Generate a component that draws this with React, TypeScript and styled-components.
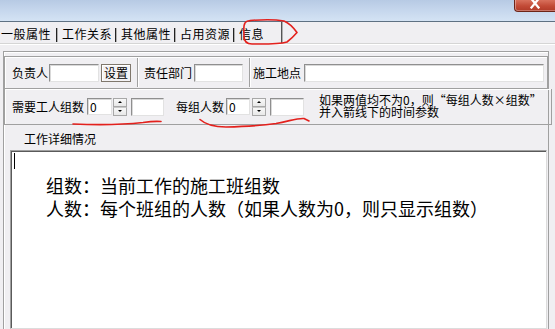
import React from 'react';
import styled, { createGlobalStyle } from 'styled-components';

const Global = createGlobalStyle`
  html, body { margin: 0; padding: 0; background: #f0eff2; }
  body {
    width: 555px; height: 329px; overflow: hidden;
    font-family: "Noto Sans CJK SC", "Noto Sans", sans-serif;
    color: #000;
  }
`;

const Window = styled.div`
  position: relative;
  width: 555px;
  height: 329px;
  overflow: hidden;
  background: #f0eff2;
  display: flex;
  flex-direction: column;
`;

const TitleBar = styled.div`
  flex: none;
  height: 21px;
  background: linear-gradient(to bottom, #b7cae4 0%, #c6d7ed 50%, #d4e3f4 100%);
  border-bottom: 1px solid #5f7183;
  display: flex;
  justify-content: flex-end;
  align-items: flex-start;
`;

const CloseBtn = styled.div`
  width: 40px;
  height: 11px;
  background: linear-gradient(to bottom, #d8705c 0%, #c24a36 55%, #b03a28 100%);
  border-left: 1px solid #6e2418;
  border-bottom: 1px solid #6e2418;
  border-bottom-left-radius: 4px;
  display: flex;
  justify-content: center;
  align-items: flex-start;
  box-shadow: inset 1px 0 0 rgba(255,255,255,0.35), inset 0 -1px 0 rgba(255,255,255,0.3);
`;

const TabStrip = styled.div`
  flex: none;
  height: 21px;
  display: flex;
  align-items: stretch;
  border-bottom: 1px solid #d5d5d5;
  box-shadow: 0 1px 0 #ffffff;
  font-size: 12px;
`;

const Tab = styled.div<{ $first?: boolean; $active?: boolean }>`
  display: flex;
  align-items: center;
  padding: 3px ${p => (p.$active ? 18 : p.$first ? 6 : 4)}px 0 ${p => (p.$first ? 1 : 5)}px;
  line-height: 12px;
  letter-spacing: 0.5px;
  position: relative;
  &::after {
    content: '';
    position: absolute;
    right: 0;
    top: ${p => (p.$active ? 0 : 6)}px;
    bottom: ${p => (p.$active ? 0 : 1)}px;
    width: 1px;
    background: ${p => (p.$active ? '#555' : '#222')};
    box-shadow: 1px 0 0 #b0b0b0;
  }
`;

const TabPage = styled.div`
  margin: 7px 6px 0 3px;
  flex: 1;
  border-left: 1px solid #a0a0a0;
  border-top: 1px solid #a0a0a0;
  border-right: 1px solid #a0a0a0;
  box-shadow: inset 1px 1px 0 #ffffff;
  padding-top: 4px;
  display: flex;
  flex-direction: column;
  font-size: 12px;
`;

const GroupRow = styled.div<{ $h: number; $mr: number }>`
  height: ${p => p.$h}px;
  box-sizing: border-box;
  margin-right: ${p => p.$mr}px;
  border: 1px solid #a0a0a0;
  box-shadow: inset 1px 1px 0 #ffffff;
  display: flex;
  align-items: center;
  padding-left: 7px;
  & + & { border-top: none; }
`;

const Label = styled.span<{ $ml?: number; $mr?: number }>`
  white-space: nowrap;
  line-height: 12px;
  margin-left: ${p => p.$ml ?? 0}px;
  margin-right: ${p => p.$mr ?? 1}px;
`;

const TextBox = styled.div<{ $w?: number; $h?: number; $grow?: boolean; $ml?: number; $mr?: number }>`
  box-sizing: border-box;
  width: ${p => (p.$w ? `${p.$w}px` : 'auto')};
  ${p => (p.$grow ? 'flex: 1;' : 'flex: none;')}
  height: ${p => p.$h ?? 18}px;
  margin-left: ${p => p.$ml ?? 0}px;
  margin-right: ${p => p.$mr ?? 0}px;
  background: #ffffff;
  border: 1px solid;
  border-color: #8f8f8f #e2e2e2 #e2e2e2 #8f8f8f;
  box-shadow: inset 1px 1px 0 #d9d9d9;
  font-size: 12px;
  line-height: 15px;
  padding-left: 2px;
`;

const Button = styled.div`
  box-sizing: border-box;
  width: 30px;
  height: 18px;
  margin-left: 2px;
  border: 1px solid #7f776c;
  background: #f3f2f4;
  box-shadow: inset 1px 1px 0 #ffffff;
  display: flex;
  align-items: center;
  justify-content: center;
  font-size: 12px;
  line-height: 12px;
`;

const Separator = styled.div<{ $ml: number; $mr: number }>`
  align-self: stretch;
  width: 1px;
  margin: 1px ${p => p.$mr}px 1px ${p => p.$ml}px;
  background: #a0a0a0;
  box-shadow: 1px 0 0 #ffffff;
`;

const Spinner = styled.div<{ $ml: number }>`
  flex: none;
  width: 14px;
  height: 18px;
  margin-left: ${p => p.$ml}px;
  display: flex;
  flex-direction: column;
`;

const SpinBtn = styled.div`
  flex: 1;
  box-sizing: border-box;
  border: 1px solid #a8a8a8;
  background: linear-gradient(to bottom, #f8f8f8, #e8e8e8);
  display: flex;
  align-items: center;
  justify-content: center;
  & + & { border-top-color: #c8c8c8; }
`;

const Arrow = styled.div<{ $up?: boolean }>`
  width: 0;
  height: 0;
  border-left: 2px solid transparent;
  border-right: 2px solid transparent;
  ${p => (p.$up ? 'border-bottom: 2px solid #000;' : 'border-top: 2px solid #000;')}
`;

const Note = styled.div`
  margin-left: 15px;
  font-size: 12px;
  line-height: 12px;
  white-space: nowrap;
  margin-top: -2px;
`;

const DetailLabel = styled.div`
  margin: 8px 0 0 20px;
  height: 12px;
  line-height: 12px;
  font-size: 12px;
`;

const Memo = styled.div`
  margin: 5px 1px 0 6px;
  flex: 1;
  background: #ffffff;
  border: 1px solid;
  border-color: #a0a0a0 #dcdcdc #dcdcdc #a0a0a0;
  box-shadow: inset 1px 1px 0 #5a5a5a;
  padding: 0 0 0 3px;
  font-size: 18px;
  line-height: 23px;
`;

const MemoLine = styled.div<{ $indent?: number }>`
  height: 23px;
  padding-left: ${p => p.$indent ?? 0}px;
  white-space: nowrap;
  display: flex;
  align-items: center;
`;

const Caret = styled.span`
  display: inline-block;
  width: 1px;
  height: 16px;
  background: #000;
  margin-top: -3px;
`;

const Overlay = styled.svg`
  position: absolute;
  left: 0;
  top: 0;
  pointer-events: none;
`;

const SpinBox = ({ ml }: { ml: number }) => (
  <Spinner $ml={ml}>
    <SpinBtn><Arrow $up /></SpinBtn>
    <SpinBtn><Arrow /></SpinBtn>
  </Spinner>
);

export default function App() {
  return (
    <>
      <Global />
      <Window>
        <TitleBar>
          <CloseBtn>
            <svg width="10" height="9" viewBox="0 0 10 9">
              <path d="M1.5 -1 L8.5 7.5 M8.5 -1 L1.5 7.5" stroke="#fff" strokeWidth="2.2" strokeLinecap="square" />
            </svg>
          </CloseBtn>
        </TitleBar>
        <TabStrip>
          <Tab $first>一般属性</Tab>
          <Tab>工作关系</Tab>
          <Tab>其他属性</Tab>
          <Tab>占用资源</Tab>
          <Tab $active>信息</Tab>
        </TabStrip>
        <TabPage>
          <GroupRow $h={33} $mr={0}>
            <Label>负责人</Label>
            <TextBox $w={50} />
            <Button>设置</Button>
            <Separator $ml={6} $mr={6} />
            <Label>责任部门</Label>
            <TextBox $w={49} $ml={1} />
            <Separator $ml={6} $mr={3} />
            <Label $mr={3}>施工地点</Label>
            <TextBox $grow $mr={3} />
          </GroupRow>
          <GroupRow $h={36} $mr={-4}>
            <Label $mr={3}>需要工人组数</Label>
            <TextBox $w={25} $h={17}>0</TextBox>
            <SpinBox ml={1} />
            <TextBox $w={33} $ml={4} />
            <Label $ml={12} $mr={2}>每组人数</Label>
            <TextBox $w={24} $h={17}>0</TextBox>
            <SpinBox ml={2} />
            <TextBox $w={34} $ml={4} />
            <Note>
              如果两值均不为0，则“每组人数×组数”<br />
              并入箭线下的时间参数
            </Note>
          </GroupRow>
          <DetailLabel>工作详细情况</DetailLabel>
          <Memo>
            <MemoLine><Caret /></MemoLine>
            <MemoLine $indent={32}>组数：当前工作的施工班组数</MemoLine>
            <MemoLine $indent={32}>人数：每个班组的人数（如果人数为0，则只显示组数）</MemoLine>
          </Memo>
        </TabPage>
        <Overlay width="555" height="329" viewBox="0 0 555 329">
          <g fill="none" stroke="#e3211d" strokeWidth="1.6" strokeLinecap="round" strokeLinejoin="round">
            <path d="M250 20.5 C262 19.5 276 19.5 284 21 C289 23 293 27 297 32.5 C294 36 291 39 287 42 C278 44.5 262 44 252 44 C246 44 244 41 244 36 C244 31 243 26 245 23 C246 21 248 20.5 252 20.5" />
            <path d="M73 124 C95 125 125 124.5 143 122.5 C150 121.5 155 121 161 121.5" />
            <path d="M200 119.5 C205 124 212 127 226 127 C245 126.5 262 125.5 276 123.5 C290 121 297 118 304 118.5 L309 121" />
          </g>
        </Overlay>
      </Window>
    </>
  );
}
